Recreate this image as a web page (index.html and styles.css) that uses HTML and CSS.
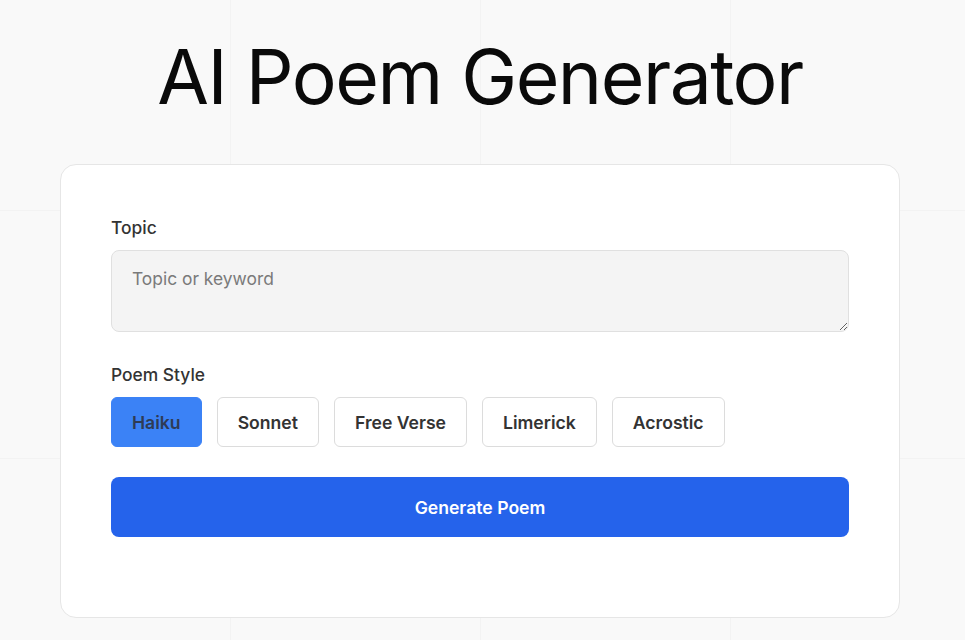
FILE: index.html
```html
<!DOCTYPE html>
<html lang="en">
<head>
<meta charset="utf-8">
<title>AI Poem Generator</title>
<link rel="stylesheet" href="styles.css">
</head>
<body>
<main class="page">
  <h1 class="title">AI Poem Generator</h1>
  <section class="card">
    <label class="label" for="topic">Topic</label>
    <textarea id="topic" class="topic" placeholder="Topic or keyword"></textarea>
    <div class="label style-label">Poem Style</div>
    <div class="styles">
      <button class="chip active">Haiku</button>
      <button class="chip">Sonnet</button>
      <button class="chip">Free Verse</button>
      <button class="chip">Limerick</button>
      <button class="chip">Acrostic</button>
    </div>
    <button class="generate">Generate Poem</button>
  </section>
</main>
</body>
</html>
```
FILE: styles.css
```css
html, body {
  margin: 0;
  padding: 0;
  height: 100%;
}
body {
  font-family: Inter, "Noto Sans", sans-serif;
  background-color: #f9f9f9;
  background-image:
    linear-gradient(to right, rgba(0,0,0,0.025) 1px, transparent 1px),
    linear-gradient(to bottom, rgba(0,0,0,0.025) 1px, transparent 1px);
  background-size: 250px 248px;
  background-position: -20px -38px;
  color: #333;
  overflow: hidden;
}
.page {
  display: flex;
  flex-direction: column;
  align-items: center;
  padding-top: 30px;
  padding-right: 5px;
}
.title {
  margin: 0;
  font-size: 75px;
  font-weight: 400;
  line-height: 93px;
  color: #0a0a0a;
  letter-spacing: -1.5px;
}
.card {
  margin-top: 41px;
  width: 738px;
  padding: 51px 50px 80px;
  background: #fff;
  border: 1px solid #e6e6e6;
  border-radius: 16px;
  display: flex;
  flex-direction: column;
}
.label {
  font-size: 17.4px;
  font-weight: 500;
  color: #333;
  line-height: 24px;
  margin-bottom: 10px;
}
.topic {
  box-sizing: border-box;
  height: 82px;
  width: 100%;
  resize: vertical;
  background: #f4f4f4;
  border: 1px solid #e0e0e0;
  border-radius: 8px;
  padding: 16px 20px;
  font-family: inherit;
  font-size: 17.4px;
  line-height: 24px;
  color: #333;
  outline: none;
}
.topic::placeholder {
  color: #7a7a7a;
}
.style-label {
  margin-top: 31px;
  margin-bottom: 10px;
}
.styles {
  display: flex;
  gap: 15px;
}
.chip {
  height: 50px;
  padding: 0 20px;
  background: #fff;
  border: 1px solid #dcdcdc;
  border-radius: 6px;
  font-family: inherit;
  font-size: 17.6px;
  font-weight: 600;
  color: #333;
}
.chip.active {
  background: #3b82f6;
  border-color: #3b82f6;
  color: #2e3b55;
}
.generate {
  margin-top: 30px;
  height: 60px;
  width: 100%;
  background: #2563eb;
  border: none;
  border-radius: 8px;
  color: #fff;
  font-family: inherit;
  font-size: 17.6px;
  font-weight: 600;
}
```
